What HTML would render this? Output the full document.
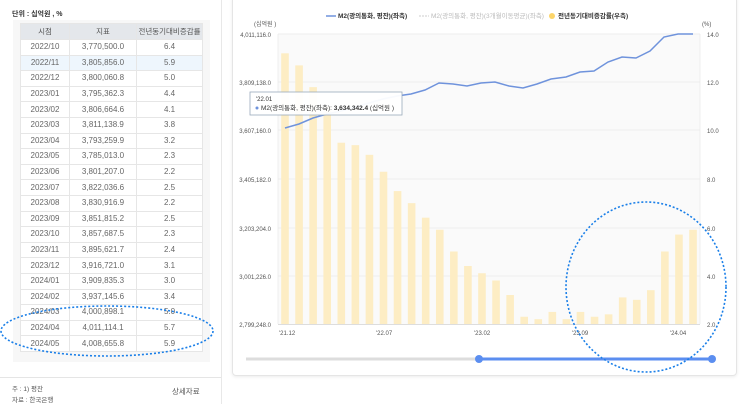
<!DOCTYPE html>
<html><head><meta charset="utf-8"><style>
body{margin:0;width:743px;height:404px;background:#fff;font-family:"Liberation Sans","Noto Sans CJK KR",sans-serif;overflow:hidden;position:relative}
.unit{position:absolute;left:12px;top:9px;font-size:7px;font-weight:bold;color:#333}
.lp{position:absolute;left:13px;top:20px;width:197px;height:342px;background:#f7f7f7}
table{position:absolute;left:20px;top:23px;border-collapse:collapse;font-size:8px;color:#666;table-layout:fixed;width:182px}
td,th{height:14.6px;line-height:14px;padding:0;text-align:center;border:1px solid #e6e6e6;background:#fff;font-weight:normal;white-space:nowrap;overflow:hidden}
th{background:#e4e7eb;color:#555;height:15px;font-size:7.5px}
tr.hl td{background:#eef6fd}
.sep{position:absolute;left:0;top:377px;width:221px;border-top:1px solid #e5e5e5}
.vline{position:absolute;left:221px;top:0;height:404px;border-left:1px solid #e8e8e8}
.ft{position:absolute;font-size:6.5px;color:#555}
.card{position:absolute;left:232px;top:-4px;width:503px;height:378px;border:1px solid #e5e5e5;border-radius:4px;box-shadow:0 1px 3px rgba(0,0,0,.08)}
</style></head><body>
<div class="unit">단위 : 십억원 , %</div>
<div class="lp"></div>
<table>
<colgroup><col style="width:49px"><col style="width:67px"><col style="width:66px"></colgroup>
<tr><th>시점</th><th>지표</th><th>전년동기대비증감률</th></tr>
<tr><td>2022/10</td><td>3,770,500.0</td><td>6.4</td></tr>
<tr class="hl"><td>2022/11</td><td>3,805,856.0</td><td>5.9</td></tr>
<tr><td>2022/12</td><td>3,800,060.8</td><td>5.0</td></tr>
<tr><td>2023/01</td><td>3,795,362.3</td><td>4.4</td></tr>
<tr><td>2023/02</td><td>3,806,664.6</td><td>4.1</td></tr>
<tr><td>2023/03</td><td>3,811,138.9</td><td>3.8</td></tr>
<tr><td>2023/04</td><td>3,793,259.9</td><td>3.2</td></tr>
<tr><td>2023/05</td><td>3,785,013.0</td><td>2.3</td></tr>
<tr><td>2023/06</td><td>3,801,207.0</td><td>2.2</td></tr>
<tr><td>2023/07</td><td>3,822,036.6</td><td>2.5</td></tr>
<tr><td>2023/08</td><td>3,830,916.9</td><td>2.2</td></tr>
<tr><td>2023/09</td><td>3,851,815.2</td><td>2.5</td></tr>
<tr><td>2023/10</td><td>3,857,687.5</td><td>2.3</td></tr>
<tr><td>2023/11</td><td>3,895,621.7</td><td>2.4</td></tr>
<tr><td>2023/12</td><td>3,916,721.0</td><td>3.1</td></tr>
<tr><td>2024/01</td><td>3,909,835.3</td><td>3.0</td></tr>
<tr><td>2024/02</td><td>3,937,145.6</td><td>3.4</td></tr>
<tr><td>2024/03</td><td>4,000,898.1</td><td>5.0</td></tr>
<tr><td>2024/04</td><td>4,011,114.1</td><td>5.7</td></tr>
<tr><td>2024/05</td><td>4,008,655.8</td><td>5.9</td></tr>
</table>
<div class="sep"></div><div class="vline"></div>
<div class="ft" style="left:12px;top:383px">주 : 1) 평잔</div>
<div class="ft" style="left:12px;top:394px">자료 : 한국은행</div>
<div class="ft" style="left:172px;top:386px;font-size:7.5px">상세자료</div>
<div class="card"></div>
<svg style="position:absolute;left:0;top:0" width="743" height="404" font-family="Liberation Sans,Noto Sans CJK KR,sans-serif">
<rect x="278" y="34" width="422" height="290" fill="#fafafa"/>
<g stroke="#e8e8e8" stroke-width="0.7">
<line x1="278" y1="34" x2="700" y2="34"/><line x1="278" y1="82" x2="700" y2="82"/><line x1="278" y1="130" x2="700" y2="130"/><line x1="278" y1="179" x2="700" y2="179"/><line x1="278" y1="228" x2="700" y2="228"/><line x1="278" y1="276" x2="700" y2="276"/>
<line x1="278" y1="34" x2="278" y2="324"/><line x1="700" y1="34" x2="700" y2="324"/>
</g>
<line x1="278" y1="324.5" x2="700" y2="324.5" stroke="#ddd"/>
<g fill="#fdedc4" id="bars"></g>
<polyline fill="none" stroke="#6f93dc" stroke-width="1.5" points="285,128 299,124 313,118 327,114 341,111 355,107 369,103 383,99 397,96 411,94 425,90 439,83 453,84 467,86 481,83 495,82 509,86 523,88 537,84 551,79 566,77 580,72 594,71 608,62 622,57 636,58 650,51 664,37 678,34 693,34"/>
<g font-size="6" fill="#555">
<text x="271" y="37" text-anchor="end">4,011,116.0</text>
<text x="271" y="85" text-anchor="end">3,809,138.0</text>
<text x="271" y="133" text-anchor="end">3,607,160.0</text>
<text x="271" y="182" text-anchor="end">3,405,182.0</text>
<text x="271" y="231" text-anchor="end">3,203,204.0</text>
<text x="271" y="279" text-anchor="end">3,001,226.0</text>
<text x="271" y="327" text-anchor="end">2,799,248.0</text>
<text x="254" y="26">(십억원 )</text>
<text x="702" y="26">(%)</text>
<text x="707" y="37">14.0</text><text x="707" y="85">12.0</text><text x="707" y="133">10.0</text><text x="707" y="182">8.0</text><text x="707" y="231">6.0</text><text x="707" y="279">4.0</text><text x="707" y="327">2.0</text>
<text x="279" y="335">'21.12</text><text x="376" y="335">'22.07</text><text x="474" y="335">'23.02</text><text x="572" y="335">'23.09</text><text x="670" y="335">'24.04</text>
</g>
<g font-size="6.5">
<line x1="326" y1="16" x2="336" y2="16" stroke="#6f93dc" stroke-width="1.5"/><text x="338" y="18" fill="#333" font-weight="bold">M2(광의통화, 평잔)(좌측)</text>
<line x1="419" y1="16" x2="429" y2="16" stroke="#ccc" stroke-dasharray="2 1"/><text x="431" y="18" fill="#bbb">M2(광의통화, 평잔)(3개월이동평균)(좌측)</text>
<circle cx="552" cy="16" r="3" fill="#fcd56a"/><text x="558" y="18" fill="#333" font-weight="bold">전년동기대비증감률(우측)</text>
</g>
<rect x="250" y="92" width="152" height="23" fill="#fff" fill-opacity=".95" stroke="#9ab" stroke-width="0.8"/>
<text x="256" y="101" font-size="6" fill="#333">'22.01</text>
<circle cx="257" cy="108" r="1.5" fill="#6f93dc"/>
<text x="261" y="110" font-size="6.5" fill="#333">M2(광의통화, 평잔)(좌측): <tspan font-weight="bold">3,634,342.4</tspan> (십억원 )</text>
<line x1="246" y1="359" x2="479" y2="359" stroke="#ddd" stroke-width="3"/>
<line x1="479" y1="359" x2="712" y2="359" stroke="#5b8ef0" stroke-width="3"/>
<circle cx="479" cy="359" r="4" fill="#5b8ef0"/><circle cx="712" cy="359" r="4" fill="#5b8ef0"/>
<g fill="none" stroke="#1a7fe8" stroke-width="1.6" stroke-dasharray="2 2">
<ellipse cx="107" cy="331" rx="106" ry="25"/>
<ellipse cx="646" cy="287" rx="80" ry="85"/>
</g>
</svg>
<script>
var v=[13.2,12.7,11.8,11.0,9.5,9.4,9.0,8.3,7.5,7.0,6.4,5.9,5.0,4.4,4.1,3.8,3.2,2.3,2.2,2.5,2.2,2.5,2.3,2.4,3.1,3.0,3.4,5.0,5.7,5.9];
var g=document.getElementById('bars'),s='';
v.forEach(function(x,i){var c=285+i*14.07,y=324-(x-2)*24.17;s+='<rect x="'+(c-3.8)+'" y="'+y+'" width="7.6" height="'+(324-y)+'"/>';});
g.innerHTML=s;
</script>
</body></html>
